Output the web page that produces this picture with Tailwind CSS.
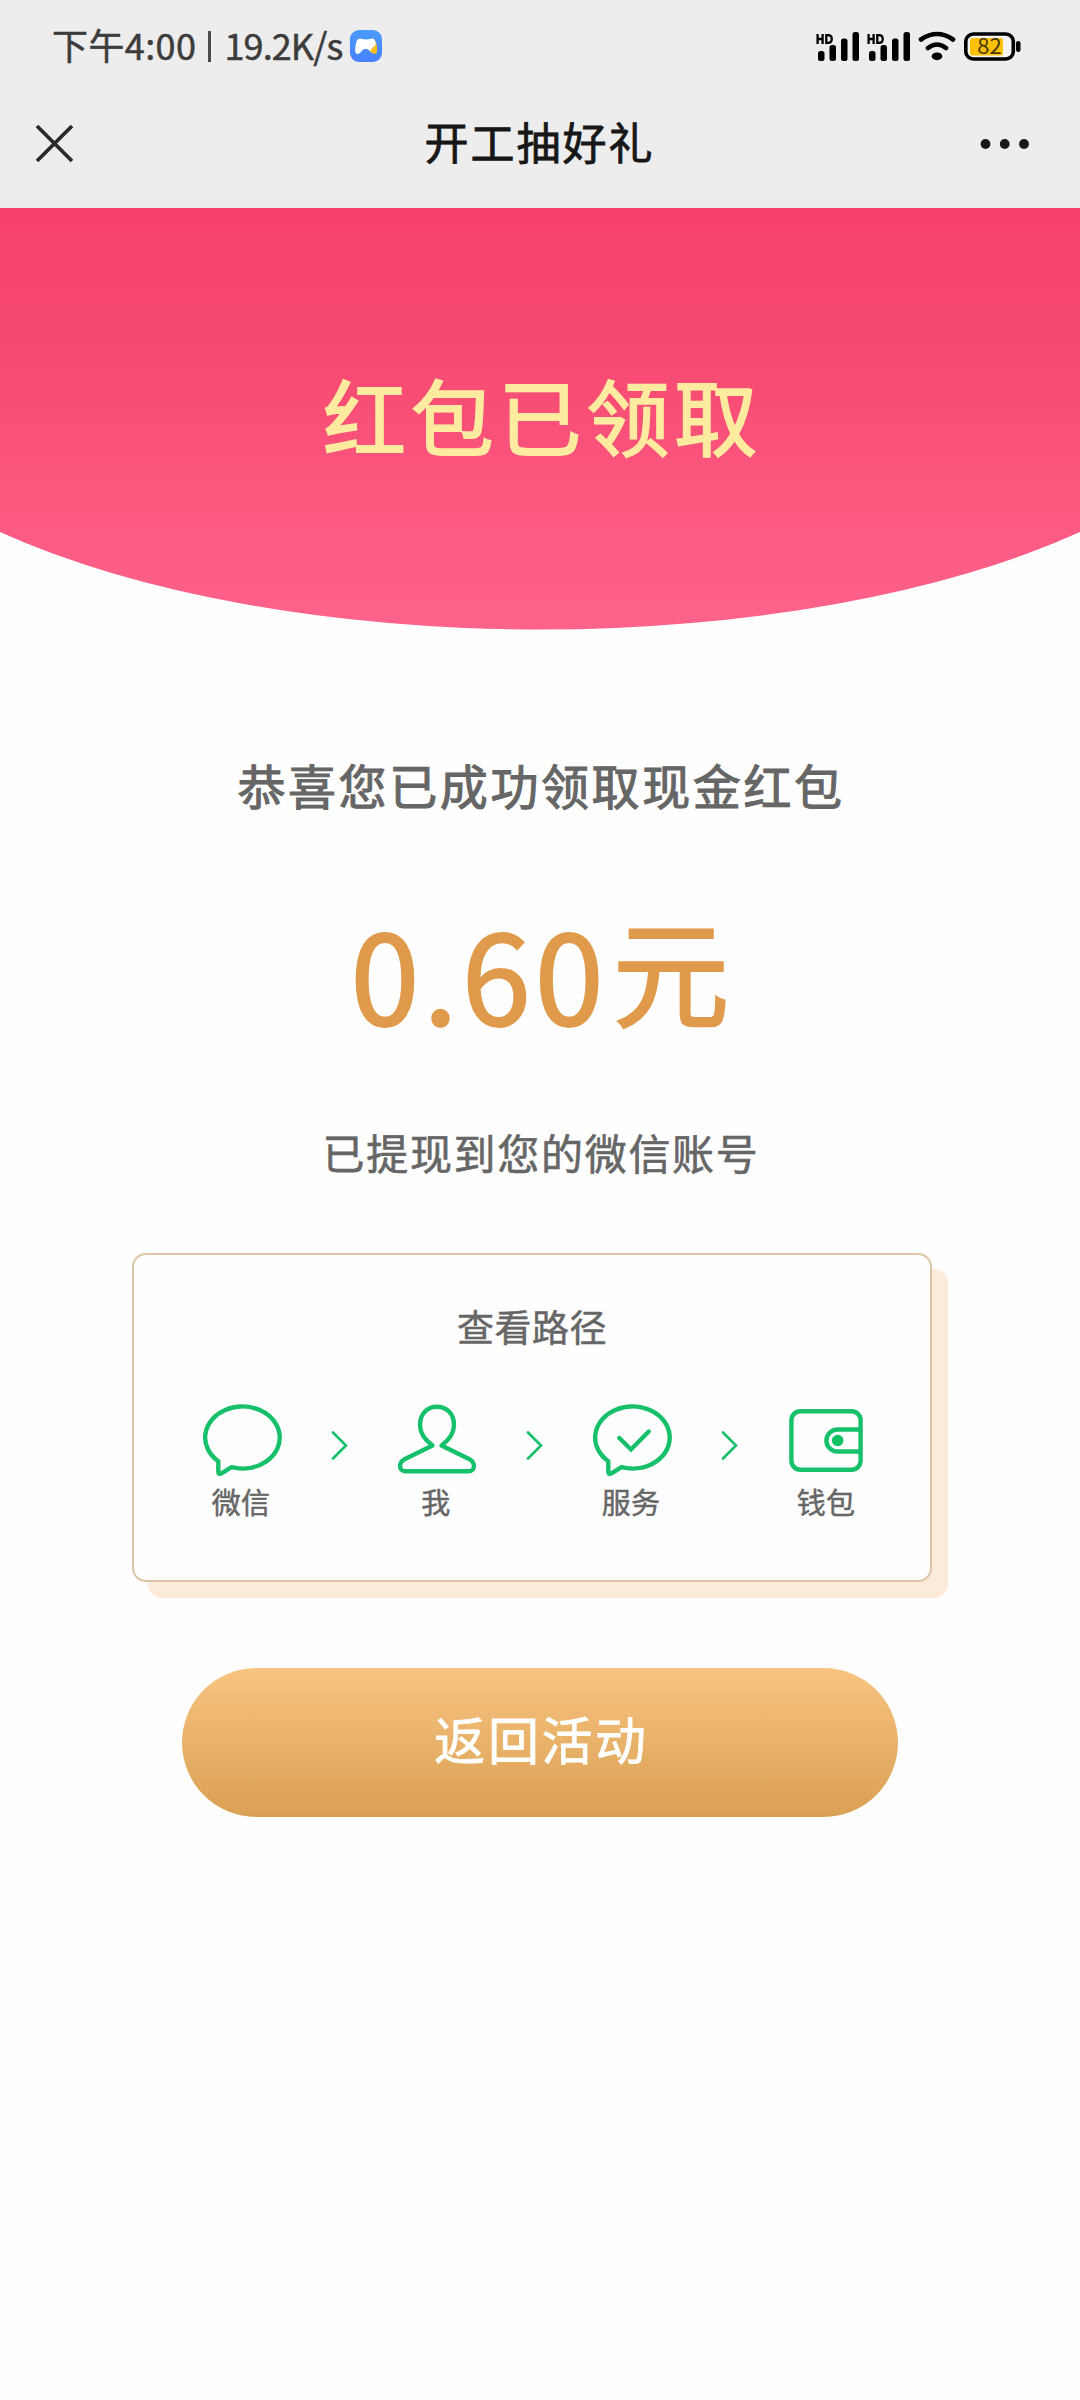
<!DOCTYPE html>
<html lang="zh-CN">
<head>
<meta charset="utf-8">
<title>开工抽好礼</title>
<script src="https://cdn.jsdelivr.net/npm/@tailwindcss/browser@4"></script>
</head>
<body class="w-[1080px] h-[2400px] overflow-hidden bg-[#fefefe] font-['Noto_Sans_CJK_SC',sans-serif] whitespace-nowrap">
  <!-- status bar -->
  <header class="bg-[#ededed] h-[208px]">
    <div class="h-[92px] flex items-center justify-between pl-[52px] pr-[59px]">
      <div class="flex items-center text-[#3c3c3c] text-[36px] leading-[48px] [-webkit-text-stroke:0.5px_#3c3c3c]">
        <span class="w-[155px] -mt-1 tracking-[0.400px]">下午4:00</span>
        <span class="w-[2.5px] h-[31px] bg-[#4a4a4a] ml-px"></span>
        <span class="w-[118px] ml-[14px] -mt-1 tracking-[-0.900px]">19.2K/s</span>
        <svg class="ml-[7px]" width="32" height="32" viewBox="0 0 32 32">
          <defs><linearGradient id="app" x1="0" y1="0" x2="0" y2="1"><stop offset="0" stop-color="#4a9cff"/><stop offset="1" stop-color="#4880ff"/></linearGradient></defs>
          <rect width="32" height="32" rx="9" fill="url(#app)"/>
          <path d="M23 8.5C26 10 27.5 16 27 21.500C26.500 25 22 24.500 19 20Z" fill="#fdbf1d"/>
          <path d="M10 8.500C12 8.500 13 9.500 16 9.500S20 8.500 22 8.500C25 8.500 26 13 25.500 15C23.500 16.500 21.500 19 20 21C18 18.800 14 18.500 12.500 20C11 22 9.500 24 7 24C4 23.500 5.500 15 6.500 11.500C7.200 9.500 8.500 8.500 10 8.500Z" fill="#fff"/>
        </svg>
      </div>
      <svg width="206" height="34" viewBox="815 29 206 34">
        <g id="sig">
          <g fill="none" stroke="#000" stroke-width="2.300"><path d="M817.600 34V44M822.600 34V44M817.600 39H822.600M826.300 35.200V42.800H828C833 42.800 833 35.200 828 35.200Z"/></g>
          <g fill="#000"><rect x="818" y="51" width="6.500" height="10" rx="2.500"/><rect x="829.500" y="45" width="6.500" height="16" rx="2.500"/><rect x="841" y="38.500" width="6.500" height="22.500" rx="2.500"/><rect x="852.500" y="32" width="6.500" height="29" rx="2.500"/></g>
        </g>
        <use href="#sig" x="51"/>
        <g fill="none" stroke="#000" stroke-width="4.600" stroke-linecap="round"><path d="M921 39.500Q937 28.500 953 39.500M928 48Q937 41 946 48"/></g>
        <ellipse cx="937" cy="56.300" rx="5.300" ry="3.900"/>
        <rect x="965.800" y="34" width="47.500" height="25" rx="7.500" fill="#f4f4f4" stroke="#000" stroke-width="3.600"/>
        <rect x="970" y="38" width="33" height="17.500" rx="2.500" fill="#ffc107"/>
        <rect x="1016" y="41" width="4.500" height="11" rx="2.200"/>
        <text x="989.500" y="54" text-anchor="middle" font-family="Noto Sans CJK SC" font-size="22" fill="#4b3a00">82</text>
      </svg>
    </div>
    <!-- title bar -->
    <div class="h-[103px] flex items-center justify-between pl-[35px] pr-[50px]">
      <svg width="39" height="39" viewBox="0 0 39 39" fill="none" stroke="#2a2a2a" stroke-width="3.800"><path d="M2 2L37 37M37 2L2 37"/></svg>
      <h1 class="text-[44px] leading-[60px] tracking-[2px] text-[#171717] -mt-[5px] ml-[25px] [-webkit-text-stroke:0.8px_#171717]">开工抽好礼</h1>
      <svg width="50" height="12" viewBox="0 0 50 12" fill="#171717"><circle cx="5.500" cy="6" r="4.900"/><circle cx="24.700" cy="6" r="4.900"/><circle cx="44" cy="6" r="4.900"/></svg>
    </div>
  </header>

  <main class="flex flex-col items-center">
    <section class="relative w-full h-[422px] flex items-center justify-center">
      <svg class="absolute inset-0" width="1080" height="422" viewBox="0 0 1080 422">
        <defs><linearGradient id="hero" x1="0" y1="0" x2="0" y2="1"><stop offset="0" stop-color="#f6416a"/><stop offset="0.300" stop-color="#f64870"/><stop offset="0.700" stop-color="#fb5880"/><stop offset="1" stop-color="#ff638b"/></linearGradient></defs>
        <path d="M0 0H1080V324A720 288 0 0 1 0 324Z" fill="url(#hero)"/>
      </svg>
      <h2 class="relative text-[83px] leading-[100px] tracking-[4.800px] text-[#ffeb9f] -mt-[11px] ml-[5px] [-webkit-text-stroke:1.8px_#ffeb9f]">红包已领取</h2>
    </section>

    <p class="mt-[124px] h-[60px] text-[48px] leading-[60px] tracking-[2.600px] text-[#666] ml-[2px] [-webkit-text-stroke:1.1px_#666]">恭喜您已成功领取现金红包</p>
    <p class="mt-[77px] h-[160px] flex items-start text-[#e09a4b] leading-[160px] [-webkit-text-stroke:2px_#e09a4b]"><span class="text-[124px] tracking-[4px]">0.60</span><span class="text-[117px] ml-[5px] -mt-[3px]">元</span></p>
    <p class="mt-[73px] h-[56px] text-[42px] leading-[56px] tracking-[1.700px] text-[#666] ml-[2px] [-webkit-text-stroke:0.6px_#666]">已提现到您的微信账号</p>

    <!-- path to the wallet -->
    <section class="mt-[73px] mr-[16px] w-[800px] h-[329px] rounded-[14px] border-2 border-[#dcc5a6] shadow-[16px_16px_0_#fdebd9] bg-[#fefefe] flex flex-col items-center">
      <h3 class="mt-[45px] h-[52px] text-[37px] leading-[52px] tracking-[0.500px] text-[#666] [-webkit-text-stroke:0.5px_#666]">查看路径</h3>
      <div class="mt-[50px] flex self-start ml-[59px] text-[29px] leading-[40px] tracking-[0.300px] text-[#666]">
        <div class="w-[98px] flex flex-col items-center">
          <svg width="84" height="76" viewBox="0 0 84 76" fill="none" stroke="#17c06a" stroke-width="4.400" stroke-linejoin="round"><path d="M31.500 65.200A37.300 31 0 1 0 18.300 59.200V70Q18.500 73 21.500 71.400Z"/></svg>
          <span class="mt-[3px] mr-[2px] [-webkit-text-stroke:0.5px_#666]">微信</span>
        </div>
        <div class="w-[97px] flex justify-center pt-[29px]"><svg width="17" height="29" viewBox="0 0 17 29" fill="none" stroke="#17c06a" stroke-width="2.600" stroke-linecap="round"><path d="M2 1.500L15 14.500L2 27.500"/></svg></div>
        <div class="w-[98px] flex flex-col items-center">
          <svg width="84" height="76" viewBox="0 0 84 76" fill="none" stroke="#17c06a" stroke-width="4.400" stroke-linejoin="round"><path d="M37.500 43.500C30 38 25 32 25 23C25 12 32 4.800 42 4.800S59 12 59 23C59 32 54 38 46.500 43.500L74.500 57.200C81 61 80 69.300 73.500 69.300H10.500C4 69.300 3 61 9.500 57.200Z"/></svg>
          <span class="mt-[3px] mr-[2px] [-webkit-text-stroke:0.5px_#666]">我</span>
        </div>
        <div class="w-[97px] flex justify-center pt-[29px]"><svg width="17" height="29" viewBox="0 0 17 29" fill="none" stroke="#17c06a" stroke-width="2.600" stroke-linecap="round"><path d="M2 1.500L15 14.500L2 27.500"/></svg></div>
        <div class="w-[98px] flex flex-col items-center">
          <svg width="84" height="76" viewBox="0 0 84 76" fill="none" stroke="#17c06a" stroke-width="4.400" stroke-linejoin="round"><path d="M31.500 65.200A37.300 31 0 1 0 18.300 59.200V70Q18.500 73 21.500 71.400Z"/><path d="M29.300 36L41 47.500L58.700 29.500" stroke-linecap="round" stroke-linejoin="miter"/></svg>
          <span class="mt-[3px] mr-[2px] [-webkit-text-stroke:0.5px_#666]">服务</span>
        </div>
        <div class="w-[97px] flex justify-center pt-[29px]"><svg width="17" height="29" viewBox="0 0 17 29" fill="none" stroke="#17c06a" stroke-width="2.600" stroke-linecap="round"><path d="M2 1.500L15 14.500L2 27.500"/></svg></div>
        <div class="w-[98px] flex flex-col items-center">
          <svg width="84" height="76" viewBox="0 0 84 76" fill="none" stroke="#17c06a" stroke-width="4.400"><rect x="6.400" y="9.200" width="69.200" height="58.600" rx="9"/><path d="M75.500 27.500H52.400A11 11 0 0 0 52.400 49.500H75.500"/><circle cx="52.700" cy="38.500" r="5.800" fill="#10c265" stroke="none"/></svg>
          <span class="mt-[3px] mr-[2px] [-webkit-text-stroke:0.5px_#666]">钱包</span>
        </div>
      </div>
    </section>

    <button class="mt-[86px] w-[716px] h-[149px] rounded-full bg-linear-to-b from-[#f8c481] to-[#daa053] text-white text-[51px] leading-[70px] tracking-[2.600px] pb-[9px] pl-[3px] [-webkit-text-stroke:0.8px_#fff]">返回活动</button>
  </main>
</body>
</html>
